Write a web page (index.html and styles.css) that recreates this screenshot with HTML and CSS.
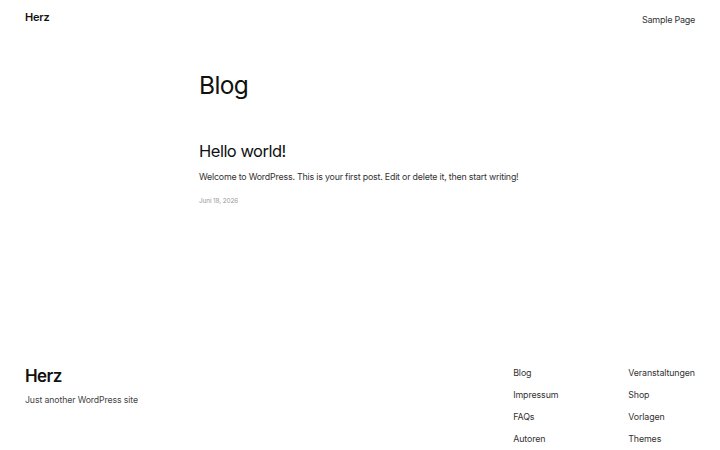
FILE: index.html
```html
<!DOCTYPE html>
<html lang="de">
<head>
<meta charset="utf-8">
<title>Blog – Herz</title>
<link rel="stylesheet" href="styles.css">
</head>
<body>
<div class="page">
  <header class="site-header">
    <a class="site-title" href="#">Herz</a>
    <nav class="top-nav"><a href="#">Sample Page</a></nav>
  </header>
  <main class="content">
    <h1 class="page-title">Blog</h1>
    <article class="post">
      <h2 class="post-title">Hello world!</h2>
      <p class="excerpt">Welcome to WordPress. This is your first post. Edit or delete it, then start writing!</p>
      <p class="post-date">Juni 18, 2026</p>
    </article>
  </main>
  <footer class="site-footer">
    <div class="footer-brand">
      <a class="footer-title" href="#">Herz</a>
      <p class="tagline">Just another WordPress site</p>
    </div>
    <nav class="footer-nav">
      <ul class="footer-col">
        <li><a href="#">Blog</a></li>
        <li><a href="#">Impressum</a></li>
        <li><a href="#">FAQs</a></li>
        <li><a href="#">Autoren</a></li>
      </ul>
      <ul class="footer-col">
        <li><a href="#">Veranstaltungen</a></li>
        <li><a href="#">Shop</a></li>
        <li><a href="#">Vorlagen</a></li>
        <li><a href="#">Themes</a></li>
      </ul>
    </nav>
  </footer>
</div>
</body>
</html>
```
FILE: styles.css
```css
* { box-sizing: border-box; }
html, body { margin: 0; padding: 0; background: #fff; }
body {
  font-family: Inter, "Noto Sans", "Liberation Sans", sans-serif;
  color: #111;
}
a { color: inherit; text-decoration: none; }
.page {
  min-height: 450px;
  display: flex;
  flex-direction: column;
}
.site-header {
  display: flex;
  justify-content: space-between;
  align-items: center;
  padding: 8px 25px 10px;
  height: 35px;
}
.site-title {
  font-size: 11px;
  font-weight: 600;
  letter-spacing: -0.2px;
}
.top-nav a {
  font-size: 9px;
  letter-spacing: -0.25px;
  color: #333;
}
.content {
  width: 322px;
  margin: 0 auto;
}
.page-title {
  margin: 36px 0 0;
  font-size: 24.5px;
  font-weight: 400;
  line-height: 1.2;
  letter-spacing: -0.6px;
}
.post { margin-top: 42px; }
.post-title {
  margin: 0;
  font-size: 16.5px;
  font-weight: 400;
  line-height: 1.2;
  letter-spacing: -0.5px;
}
.excerpt {
  margin: 8px 0 0;
  font-size: 8.85px;
  line-height: 1.5;
  letter-spacing: -0.2px;
  color: #333;
}
.post-date {
  margin: 14px 0 0;
  font-size: 6.4px;
  letter-spacing: -0.1px;
  color: #999;
}
.site-footer {
  margin-top: auto;
  display: flex;
  justify-content: space-between;
  align-items: flex-start;
  padding: 0 25px 4px;
}
.footer-title {
  display: block;
  font-size: 17px;
  font-weight: 600;
  line-height: 1.2;
  letter-spacing: -0.6px;
}
.tagline {
  margin: 9px 0 0;
  font-size: 8.7px;
  letter-spacing: -0.1px;
  color: #444;
}
.footer-nav {
  display: grid;
  grid-template-columns: 115px auto;
}
.footer-col {
  list-style: none;
  margin: 0;
  padding: 0;
  display: flex;
  flex-direction: column;
  gap: 8px;
}
.footer-col li {
  font-size: 8.85px;
  line-height: 14px;
  letter-spacing: -0.1px;
  color: #333;
}
```
